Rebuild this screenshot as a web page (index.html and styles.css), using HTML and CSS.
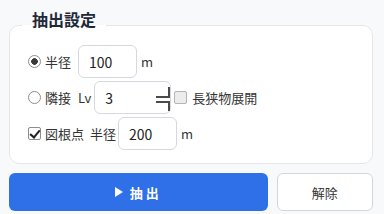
FILE: index.html
```html
<!DOCTYPE html>
<html lang="ja">
<head>
    <meta charset="UTF-8">
    <meta name="viewport" content="width=device-width, initial-scale=1.0">
    <title>抽出設定</title>
    <link rel="stylesheet" href="styles.css">
</head>
<body>
    <fieldset class="panel">
        <legend>抽出設定</legend>
        <div class="row">
            <label class="opt"><input type="radio" name="mode" checked>半径</label>
            <input type="text" class="num w-short" value="100">
            <span class="unit">m</span>
        </div>
        <div class="row">
            <label class="opt"><input type="radio" name="mode">隣接</label>
            <span class="lv">Lv</span>
            <span class="spin"><input type="text" class="num w-lv" value="3"></span>
            <label class="opt sub"><input type="checkbox">長狭物展開</label>
        </div>
        <div class="row">
            <label class="opt"><input type="checkbox" checked>図根点</label>
            <span class="lbl">半径</span>
            <input type="text" class="num w-short" value="200">
            <span class="unit">m</span>
        </div>
    </fieldset>
    <div class="actions">
        <button class="btn primary"><svg class="tri" width="8" height="10" viewBox="0 0 8 10"><path d="M0 0 L8 5 L0 10 Z" fill="white"/></svg>抽出</button>
        <button class="btn">解除</button>
    </div>
</body>
</html>
```

FILE: styles.css
```css
body {
    margin: 0;
    padding: 8px 11px 0 9px;
    background-color: #f8f9fb;
    font-family: "Noto Sans CJK JP", sans-serif;
    font-size: 13px;
    color: #333;
}
.panel {
    margin: 0;
    padding: 3px 12px 13px;
    border: 1px solid #e4e6eb;
    border-radius: 10px;
    background-color: white;
}
legend {
    padding: 0 10px 12px;
    font-size: 16px;
    font-weight: bold;
    line-height: 22px;
    color: #1f2937;
}
.row {
    display: flex;
    align-items: center;
    margin-bottom: 3px;
}
.row:last-child {
    margin-bottom: 0;
}
.opt {
    display: flex;
    align-items: center;
}
.opt input {
    appearance: none;
    box-sizing: border-box;
    width: 13px;
    height: 13px;
    margin: 0 4px 0 6px;
    border: 1px solid #8d8d8d;
    background-color: white;
    position: relative;
}
.opt input[type="radio"] {
    border-radius: 50%;
}
.opt input[type="radio"]:checked {
    background: radial-gradient(circle, #3a3a3a 0 3px, white 3.6px);
}
.opt input[type="checkbox"] {
    border-radius: 2px;
}
.sub input[type="checkbox"] {
    margin: 0 5px 0 3px;
    border-color: #b4b4b4;
    background-color: #ececec;
}
.opt input[type="checkbox"]:checked::after {
    content: "";
    position: absolute;
    left: 3px;
    top: 0px;
    width: 4px;
    height: 8px;
    border-right: 2px solid #222;
    border-bottom: 2px solid #222;
    transform: rotate(40deg);
}
.num {
    box-sizing: border-box;
    height: 33px;
    padding: 0 10px;
    border: 1px solid #d5d8de;
    border-radius: 6px;
    font-family: inherit;
    font-size: 14px;
    color: #222;
    background: white;
}
.w-short {
    width: 59px;
    margin-left: 7px;
}
.spin {
    position: relative;
    display: flex;
    margin-left: 3px;
}
.w-lv {
    width: 77px;
}
/* spin button marks */
.spin::before, .spin::after {
    content: "";
    position: absolute;
    right: 1px;
    width: 12px;
    border-right: 2px solid #4a4a4a;
}
.spin::before {
    top: 6px;
    height: 9px;
    border-bottom: 2px solid #4a4a4a;
}
.spin::after {
    bottom: 3px;
    height: 8px;
    border-top: 2px solid #4a4a4a;
}
.lv {
    margin-left: 7px;
}
.lbl {
    margin-left: 6px;
}
.row:last-child .w-short {
    margin-left: 2px;
}
.unit {
    margin-left: 4px;
}
.actions {
    display: flex;
    gap: 9px;
    margin-top: 9px;
}
.btn {
    flex: 1;
    height: 38px;
    border: 1px solid #d3d6dc;
    border-radius: 6px;
    background-color: white;
    font-family: inherit;
    font-size: 13px;
    color: #333;
    cursor: pointer;
}
.btn.primary {
    flex: 3;
    display: flex;
    align-items: center;
    justify-content: center;
    padding-left: 6px;
    border: none;
    background-color: #2f6fe8;
    color: white;
    font-weight: bold;
    letter-spacing: 3px;
}
.tri {
    margin-right: 7px;
}
```
